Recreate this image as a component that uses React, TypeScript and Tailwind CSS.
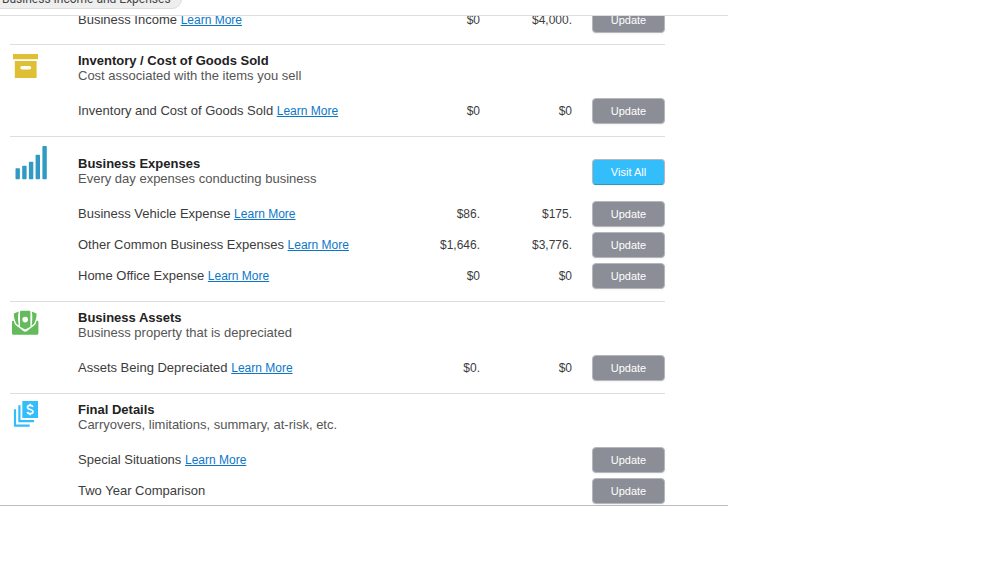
import React from 'react';
import clsx from 'clsx';

interface Row {
  label: string;
  learnMore?: boolean;
  lastYear?: string;
  thisYear?: string;
}

interface SectionProps {
  title: string;
  description: string;
  icon: React.ReactNode;
  rows: Row[];
  visitAll?: boolean;
}

const InventoryIcon = () => (
  <svg viewBox="0 0 40 37" className="h-[37px] w-10" aria-hidden="true">
    <rect x="3" y="2" width="25" height="5.2" fill="#dfbf33" />
    <path fill="#dfbf33" fillRule="evenodd" d="M4.8 8.9h21.8V26H4.8zM12 14.1a1.7 1.7 0 0 0 0 3.4h7.500a1.700 1.700 0 0 0 0-3.400z" />
  </svg>
);

const ExpensesIcon = () => (
  <svg viewBox="0 0 40 37" className="h-[37px] w-10" fill="#2f9bc4" aria-hidden="true">
    <rect x="5.500" y="24.200" width="4.400" height="11" rx="0.8" />
    <rect x="12.200" y="21.800" width="4.400" height="13.400" rx="0.8" />
    <rect x="18.900" y="17.700" width="4.400" height="17.500" rx="0.8" />
    <rect x="25.600" y="10.800" width="4.400" height="24.400" rx="0.8" />
    <rect x="32.400" y="2" width="4.400" height="33.200" rx="0.8" />
  </svg>
);

const AssetsIcon = () => (
  <svg viewBox="0 0 40 37" className="h-[37px] w-10" fill="#64bb5c" aria-hidden="true">
    <path fillRule="evenodd" d="M11.200 1.700h8a1.200 1.200 0 0 1 1.200 1.200v14.800l-5.200 2.800-5.200-2.800V2.900a1.200 1.200 0 0 1 1.200-1.200zM15.200 7.800a2.800 2.800 0 1 0 0 5.600 2.800 2.800 0 0 0 0-5.600z" />
    <path d="M3.900 4.500 8.700 2.400c-.9 4-.8 8.500.1 14L6.500 14.900C4.700 11.500 3.600 8 3.900 4.500z" />
    <path d="M26.500 4.500 21.700 2.400c.9 4 .8 8.500-.1 14l2.300-1.500c1.800-3.400 2.900-6.900 2.600-10.400z" />
    <path d="M2 12.400c0-.8 1.200-1 1.900-.4.3 1.800 1 3.400 2.100 4.300l7.300 5.700c1.200.9 2.600.9 3.800 0l7.300-5.700c1.100-.9 1.800-2.500 2.100-4.300.7-.6 1.900-.4 1.900.4v11.900c0 .9-.6 1.500-1.500 1.500H3.500c-.9 0-1.500-.6-1.500-1.500z" />
  </svg>
);

const DetailsIcon = () => (
  <svg viewBox="0 0 40 37" className="h-[37px] w-10" aria-hidden="true">
    <path fill="#33bdfb" d="M12.300 0H28v17H12.300z" />
    <path fill="none" stroke="#33bdfb" strokeWidth="2.200" d="M9.400 4.300v15.900h14.700M5 8.300v16.300h14.700" />
    <path
      fill="none"
      stroke="#fff"
      strokeWidth="1.700"
      d="M23 5.800c-.6-1.100-1.600-1.500-2.800-1.500-1.600 0-2.700.7-2.700 2 0 2.800 5.500 1.500 5.500 4.300 0 1.400-1.200 2.100-2.800 2.100-1.300 0-2.400-.5-3-1.700M20.200 2.700v1.700M20.200 12.500v1.800"
    />
  </svg>
);

const ActionButton = ({ label, primary }: { label: string; primary?: boolean }) => (
  <button
    type="button"
    className={clsx(
      'h-[26px] w-[73px] rounded border border-[#b5b7ba] text-[11px] leading-4 text-white shadow-xs',
      primary ? 'bg-[#33bdfb] border-b-[#3295bd]' : 'bg-[#8b8e96]'
    )}
  >
    {label}
  </button>
);

const RowTable = ({ rows }: { rows: Row[] }) => (
  <table className="w-full table-fixed">
    <tbody>
      {rows.map((row) => (
        <tr key={row.label} className="h-[31px]">
          <th scope="row" className="p-0 text-left font-normal whitespace-nowrap">
            {row.label}{' '}
            {row.learnMore && (
              <a href="#" className="text-[12px] text-[#0b77c9] underline">
                Learn More
              </a>
            )}
          </th>
          <td className="w-[92px] p-0 text-right text-[12px]">{row.lastYear}</td>
          <td className="w-[92px] p-0 text-right text-[12px]">{row.thisYear}</td>
          <td className="w-[93px] p-0">
            <div className="flex justify-end">
              <ActionButton label="Update" />
            </div>
          </td>
        </tr>
      ))}
    </tbody>
  </table>
);

const Section = ({ title, description, icon, rows, visitAll }: SectionProps) => (
  <section className="flex border-t border-[#dedede] pb-2.5">
    <div className="w-[68px] shrink-0 pt-[7px]">{icon}</div>
    <div className={clsx('min-w-0 flex-1', visitAll ? 'pt-[19px]' : 'pt-2')}>
      <div className="mb-[11px] flex h-[31px] items-center justify-between">
        <div>
          <h2 className="leading-[15px] font-bold text-[#222]">{title}</h2>
          <p className="leading-4 text-[#555]">{description}</p>
        </div>
        {visitAll && <ActionButton label="Visit All" primary />}
      </div>
      <RowTable rows={rows} />
    </div>
  </section>
);

const sections: SectionProps[] = [
  {
    title: 'Inventory / Cost of Goods Sold',
    description: 'Cost associated with the items you sell',
    icon: <InventoryIcon />,
    rows: [{ label: 'Inventory and Cost of Goods Sold', learnMore: true, lastYear: '$0', thisYear: '$0' }],
  },
  {
    title: 'Business Expenses',
    description: 'Every day expenses conducting business',
    icon: <ExpensesIcon />,
    visitAll: true,
    rows: [
      { label: 'Business Vehicle Expense', learnMore: true, lastYear: '$86.', thisYear: '$175.' },
      { label: 'Other Common Business Expenses', learnMore: true, lastYear: '$1,646.', thisYear: '$3,776.' },
      { label: 'Home Office Expense', learnMore: true, lastYear: '$0', thisYear: '$0' },
    ],
  },
  {
    title: 'Business Assets',
    description: 'Business property that is depreciated',
    icon: <AssetsIcon />,
    rows: [{ label: 'Assets Being Depreciated', learnMore: true, lastYear: '$0.', thisYear: '$0' }],
  },
  {
    title: 'Final Details',
    description: 'Carryovers, limitations, summary, at-risk, etc.',
    icon: <DetailsIcon />,
    rows: [{ label: 'Special Situations', learnMore: true }, { label: 'Two Year Comparison' }],
  },
];

const App: React.FC = () => {
  return (
    <div className="min-h-screen overflow-hidden bg-white font-['Liberation_Sans',Arial,sans-serif] text-[13px] text-[#3c3c3c]">
      <header className="flex h-[15px] items-start">
        <div className="-mt-[11px] -ml-3 rounded-xl border border-[#dcdcdc] bg-[#eee] pr-2.5 pl-[13px] font-['Roboto',sans-serif] text-[12px] leading-[18px] text-[#444]">
          Business Income and Expenses
        </div>
      </header>
      <main className="h-[491px] w-full max-w-[728px] overflow-hidden border-t border-b border-t-[#dedede] border-b-[#bdbdbd] pr-[63px] pl-2.5">
        <div className="-mt-3 pb-[9px] pl-[68px]">
          <RowTable rows={[{ label: 'Business Income', learnMore: true, lastYear: '$0', thisYear: '$4,000.' }]} />
        </div>
        {sections.map((section) => (
          <Section key={section.title} {...section} />
        ))}
      </main>
    </div>
  );
};

export default App;
